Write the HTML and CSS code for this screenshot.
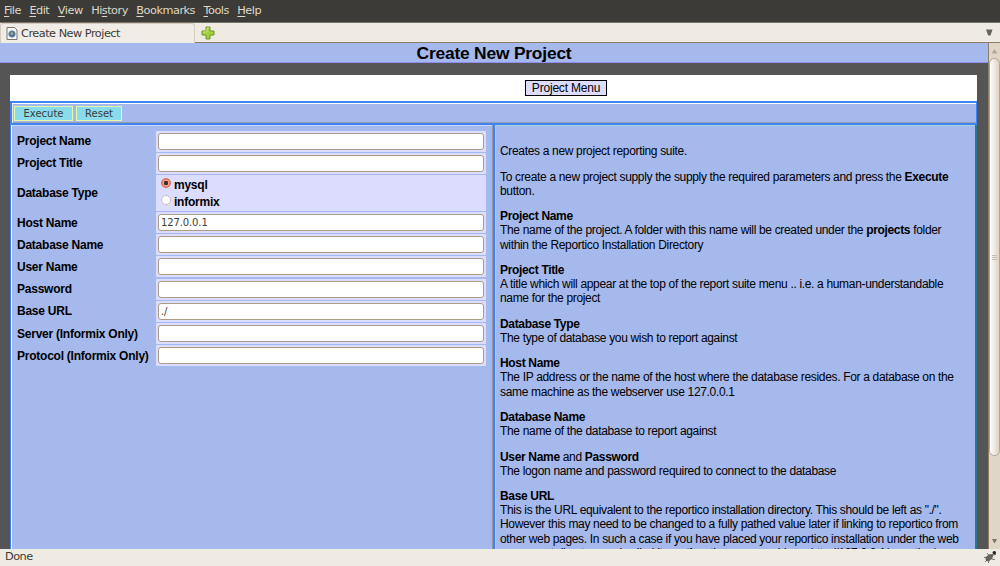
FILE: index.html
```html
<!DOCTYPE html>
<html lang="en">
<head>
<meta charset="utf-8">
<title>Create New Project</title>
<link rel="stylesheet" href="styles.css">
</head>
<body>
<div class="window">
  <nav class="menubar"><span><u>F</u>ile</span><span><u>E</u>dit</span><span><u>V</u>iew</span><span>Hi<u>s</u>tory</span><span><u>B</u>ookmarks</span><span><u>T</u>ools</span><span><u>H</u>elp</span></nav>
  <div class="tabbar">
    <div class="tab">
      <svg width="12" height="13" viewBox="0 0 12 13"><path d="M1 .5h7.500l2.500 2.500v9.500h-10z" fill="#f6f6f4" stroke="#77776f"/><circle cx="6" cy="7" r="3.300" fill="#3f6594" stroke="#89a3bc" stroke-width=".8"/><path d="M4.500 5.500l2-.5 1 1.500-1.500 2-1.500-1z" fill="#9db583"/></svg>
      <span>Create New Project</span>
    </div>
    <div class="tabrest">
      <svg class="plus" width="14" height="14" viewBox="0 0 14 14"><path d="M5 1h4v4h4v4h-4v4h-4v-4h-4v-4h4z" fill="#a5cf3b" stroke="#6b962a" stroke-linejoin="round"/><path d="M6 2.200h2M2.200 6h3.800v-3.500" fill="none" stroke="#cce57e"/></svg>
      <svg class="drop" width="7" height="7" viewBox="0 0 7 7"><path d="M0 .5h6.500l-2 6h-2.300z" fill="#66645e"/></svg>
    </div>
  </div>
  <div class="viewport">
    <div class="page">
      <h1>Create New Project</h1>
      <main class="sheet">
        <div class="top"><button class="projmenu">Project Menu</button></div>
        <div class="actions"><button>Execute</button><button class="reset">Reset</button></div>
        <div class="columns">
          <form class="form">
            <label>Project Name</label><div class="cell"><input></div>
            <label>Project Title</label><div class="cell"><input></div>
            <label>Database Type</label><div class="cell radios"><div><i class="radio on"></i>mysql</div><div><i class="radio"></i>informix</div></div>
            <label>Host Name</label><div class="cell"><input value="127.0.0.1"></div>
            <label>Database Name</label><div class="cell"><input></div>
            <label>User Name</label><div class="cell"><input></div>
            <label>Password</label><div class="cell"><input></div>
            <label>Base URL</label><div class="cell"><input value="./"></div>
            <label>Server (Informix Only)</label><div class="cell"><input></div>
            <label>Protocol (Informix Only)</label><div class="cell"><input></div>
          </form>
          <section class="help">
            <p>Creates a new project reporting suite.</p>
            <p>To create a new project supply the supply the required parameters and press the <b>Execute</b><br>button.</p>
            <p><b>Project Name</b><br>The name of the project. A folder with this name will be created under the <b>projects</b> folder<br>within the Reportico Installation Directory</p>
            <p><b>Project Title</b><br>A title which will appear at the top of the report suite menu .. i.e. a human-understandable<br>name for the project</p>
            <p><b>Database Type</b><br>The type of database you wish to report against</p>
            <p><b>Host Name</b><br>The IP address or the name of the host where the database resides. For a database on the<br>same machine as the webserver use 127.0.0.1</p>
            <p><b>Database Name</b><br>The name of the database to report against</p>
            <p><b>User Name</b> and <b>Password</b><br>The logon name and password required to connect to the database</p>
            <p><b>Base URL</b><br>This is the URL equivalent to the reportico installation directory. This should be left as "./".<br>However this may need to be changed to a fully pathed value later if linking to reportico from<br>other web pages. In such a case if you have placed your reportico installation under the web<br>server root directory and called it <b>another</b> then you would use http://127.0.0.1/reportico/</p>
          </section>
        </div>
      </main>
    </div>
    <div class="scroll">
      <svg class="up" width="7" height="5" viewBox="0 0 7 5"><path d="M3.500 0l3 4.500h-6z" fill="#b9aa97"/></svg>
      <div class="thumb"><i></i><i></i><i></i></div>
      <svg class="down" width="5" height="5" viewBox="0 0 5 5"><path d="M0 0h5l-2.500 4.500z" fill="#77736b"/></svg>
    </div>
  </div>
  <footer class="status"><span>Done</span>
    <svg width="14" height="14" viewBox="0 0 13 13"><ellipse cx="5.800" cy="7" rx="4" ry="2.400" transform="rotate(-42 5.800 7)" fill="#6a6862"/><path d="M1 7l4-.5M2 11l3-3M5 12l1-4M4 3l2 3M7 8l4 1M7 6l4-4M9 5l3-1" stroke="#55534e" stroke-width=".8"/><circle cx="10.500" cy="2.500" r="1.600" fill="#222"/></svg>
  </footer>
</div>
</body>
</html>
```
FILE: styles.css
```css
* { box-sizing: border-box; }
body { margin: 0; overflow: hidden; }
.window { width: 1000px; height: 566px; display: flex; flex-direction: column; background: #efebe3; font: 11.300px/14px "DejaVu Sans", sans-serif; letter-spacing: -.5px; }
.menubar { flex: none; height: 23px; background: #3c3b37; border-bottom: 1px solid #77746d; color: #dfd8c8; display: flex; gap: 8.500px; padding: 4px 4px 0; }
.menubar u { text-underline-offset: 2px; text-decoration-thickness: 1px; }
.tabbar { flex: none; height: 20px; display: flex; color: #3c3b37; }
.tab { width: 195px; display: flex; align-items: center; gap: 3px; padding-left: 5px; border: 1px solid #d5cbbb; border-bottom: 0; border-radius: 3px 3px 0 0; background: #f1ede6; }
.tabrest { flex: 1; display: flex; justify-content: space-between; align-items: center; padding: 0 7px 0 6px; border-bottom: 1px solid #8d7c66; }
.viewport { flex: none; height: 506px; display: flex; overflow: hidden; }
.page { width: 988px; height: 506px; overflow: hidden; background: #555; font-family: "Liberation Sans", Arial, sans-serif; letter-spacing: 0; color: #000; }
h1 { margin: 0; height: 20px; background: #a5b9ed; border-bottom: 1px solid #908cf0; font-size: 17.400px; line-height: 20px; letter-spacing: -.2px; text-align: center; }
.sheet { width: 967px; margin: 12px 0 0 10px; background: #fff; }
.top { height: 26px; padding: 5px 0 0 515px; }
.projmenu { width: 82px; height: 16px; border: 1px solid #000; background: #dcdcff; padding: 0; font: 12px/14px "Liberation Sans", sans-serif; letter-spacing: -.2px; display: block; }
.actions { height: 24px; background: #a5b9ed; border: 2px solid #4084f4; border-width: 2px 1px 2px 2px; box-shadow: inset 0 1px #fff, inset 1px 0 #e5ebfc, inset 0 -1px #9a9dae; display: flex; gap: 3px; padding: 3px 2px 0; }
.actions button { width: 59px; height: 15px; border: 1px solid #e5f7a8; background: #88dcec; color: #3c3b37; padding: 0; font: 10px/13px "DejaVu Sans", sans-serif; }
.actions .reset { width: 46px; }
.columns { display: flex; height: 440px; background: #a5b9ed; }
.form { flex: none; width: 483px; display: grid; grid-template-columns: 139px 330px; grid-template-rows: 21px 21px 36px repeat(7, 21px); row-gap: 1.200px; align-content: start; padding: 5.500px 0 0 6px; border-left: 1px solid #4084f4; box-shadow: inset 1px 0 #fff, inset 0 1px #c9d6f7; border-right: 1px solid #9396a8; }
label { align-self: center; font: bold 12px/14px "Liberation Sans", sans-serif; letter-spacing: -.24px; }
.cell { background: #dcdcff; padding: 2px; }
.cell input { display: block; width: 326px; height: 17px; border: 1px solid #ac9c86; border-radius: 3px; background: #fff; padding: 0 2px; color: #3c3b37; font: 10px/14px "DejaVu Sans", sans-serif; letter-spacing: -.12px; }
.radios { padding: 2.500px 5px; font: bold 12px/16.300px "Liberation Sans", sans-serif; letter-spacing: -.24px; }
.radios div { display: flex; gap: 3px; }
.radio { width: 10px; height: 10px; margin-top: 1px; border-radius: 50%; background: #fff; border: 1px solid #c8bfb4; }
.radio.on { background: radial-gradient(circle, #40302c 0 2px, #f3a48d 2.500px 3px, #ec5b48 4.500px); border-color: #d96756; }
.help { flex: 1; min-width: 0; padding: 19.300px 0 0 5px; border-left: 2px solid #4084f4; border-right: 2px solid #2c7891; box-shadow: inset 1px 1px #a8d5dc; font-size: 12px; line-height: 14.150px; letter-spacing: -.33px; white-space: nowrap; }
.help p { margin: 0 0 11.250px; }
.scroll { width: 12px; background: #e0d6c8; display: flex; flex-direction: column; align-items: center; border-left: 1px solid #8d7c66; }
.up { margin: 6px 0 4px; flex: none; }
.thumb { flex: none; width: 11px; height: 398px; border: 1px solid #b6a48d; border-radius: 6px; background: linear-gradient(90deg, #fff, #eee9e0 50%, #ddd3c3); display: flex; flex-direction: column; align-items: center; justify-content: center; gap: 1px; }
.thumb i { width: 5px; height: 1px; background: #c9bda9; }
.down { margin: auto 0 5px; flex: none; }
.status { flex: 1; display: flex; justify-content: space-between; padding: 1px 3px 0 5px; color: #3c3b37; }
```
